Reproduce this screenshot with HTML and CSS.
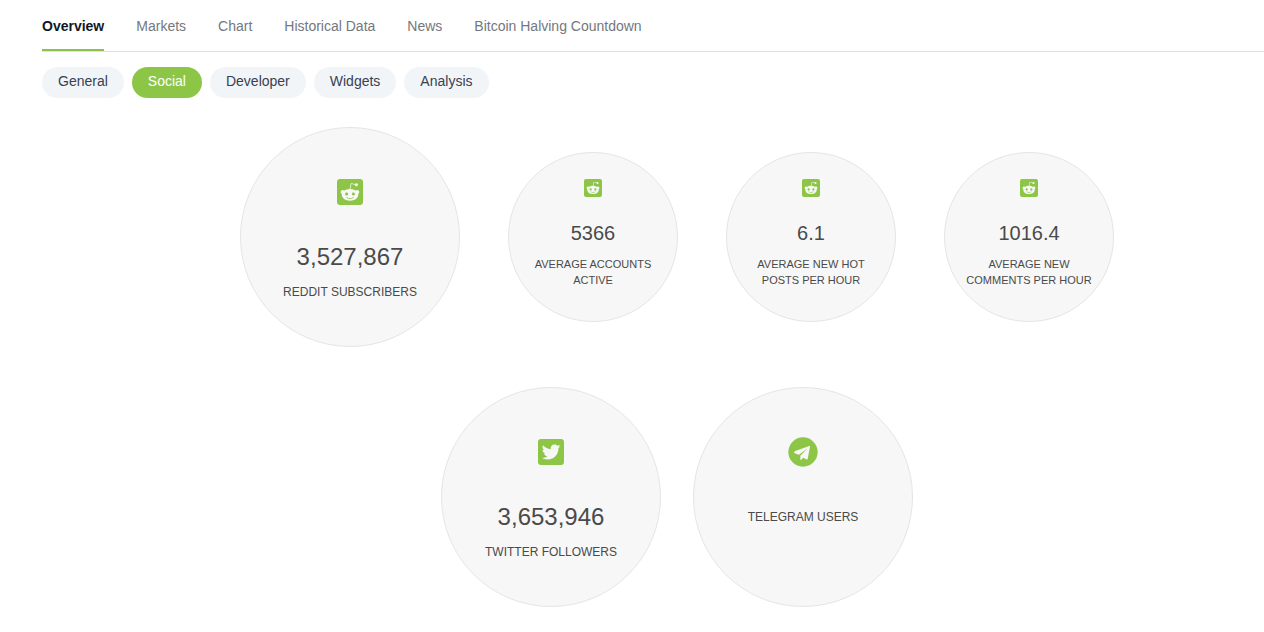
FILE: index.html
```html
<!DOCTYPE html>
<html lang="en">
<head>
<meta charset="utf-8">
<title>Bitcoin Social Stats</title>
<link rel="stylesheet" href="styles.css">
</head>
<body>
<svg class="sprite" aria-hidden="true">
  <symbol id="reddit" viewBox="0 32 448 448"><path d="M283.2 345.5c2.7 2.7 2.7 6.8 0 9.2-24.5 24.5-93.8 24.6-118.4 0-2.7-2.4-2.7-6.5 0-9.2 2.4-2.4 6.5-2.4 8.9 0 18.7 19.2 81 19.6 100.5 0 2.4-2.3 6.6-2.3 9 0zm-91.3-53.8c0-14.9-11.9-26.8-26.5-26.8-14.9 0-26.8 11.9-26.8 26.8 0 14.6 11.9 26.5 26.8 26.5 14.6 0 26.5-11.9 26.5-26.5zm90.7-26.8c-14.6 0-26.5 11.9-26.5 26.8 0 14.6 11.9 26.5 26.5 26.5 14.9 0 26.8-11.9 26.8-26.5 0-14.9-11.9-26.8-26.8-26.8zM448 80v352c0 26.5-21.5 48-48 48H48c-26.5 0-48-21.5-48-48V80c0-26.5 21.5-48 48-48h352c26.5 0 48 21.5 48 48zm-99.7 140.6c-10.1 0-19 4.2-25.6 10.7-24.1-16.7-56.5-27.4-92.5-28.6l18.7-84.2 59.5 13.4c0 14.6 11.9 26.5 26.5 26.5 14.9 0 26.8-12.2 26.8-26.8 0-14.6-11.9-26.8-26.8-26.8-10.4 0-19.3 6.2-23.8 14.9l-65.7-14.6c-3.3-.9-6.5 1.5-7.4 4.8l-20.5 92.8c-35.7 1.5-67.8 12.2-91.9 28.9-6.5-6.8-15.8-11-25.9-11-37.5 0-49.8 50.4-15.5 67.5-1.2 5.4-1.8 11-1.8 16.7 0 56.5 63.7 102.3 141.9 102.3 78.5 0 142.2-45.8 142.2-102.3 0-5.7-.6-11.6-2.1-17 33.6-17.2 21.2-67.2-16.1-67.2z"/></symbol>
  <symbol id="twitter" viewBox="0 32 448 448"><path d="M400 32H48C21.5 32 0 53.5 0 80v352c0 26.5 21.5 48 48 48h352c26.5 0 48-21.5 48-48V80c0-26.5-21.5-48-48-48zm-48.900 158.800c.2 2.800.2 5.700.2 8.500 0 86.700-66 186.600-186.600 186.600-37.200 0-71.700-10.800-100.700-29.400 5.300.6 10.400.8 15.800.8 30.700 0 58.900-10.400 81.400-28-28.800-.6-53-19.500-61.300-45.500 10.100 1.500 19.200 1.500 29.600-1.200-30-6.100-52.500-32.500-52.500-64.400v-.8c8.700 4.900 18.900 7.900 29.600 8.300a65.447 65.447 0 0 1-29.200-54.600c0-12.200 3.200-23.400 8.900-33.100 32.300 39.800 80.800 65.800 135.200 68.600-9.300-44.500 24-80.600 64-80.600 18.900 0 35.900 7.900 47.900 20.700 14.800-2.800 29-8.300 41.600-15.800-4.900 15.200-15.200 28-28.800 36.100 13.200-1.400 26-5.100 37.800-10.200-8.900 13.100-20.100 24.700-32.900 34z"/></symbol>
  <symbol id="telegram" viewBox="0 0 90 90"><circle cx="45" cy="45" r="44"/><path class="plane" d="M20 43 64 27q3-1 2 2l-7 36q-1 4-4 2l-10-5-5 6q-3 2-3-2v-10L59 34 33 53l-13-4q-4-3 0-6z"/></symbol>
</svg>

<nav class="tabs">
  <a class="tab tab-active" href="#overview">Overview</a>
  <a class="tab" href="#markets">Markets</a>
  <a class="tab" href="#chart">Chart</a>
  <a class="tab" href="#historical">Historical Data</a>
  <a class="tab" href="#news">News</a>
  <a class="tab" href="#halving">Bitcoin Halving Countdown</a>
</nav>
<nav class="pills">
  <a class="pill" href="#general">General</a>
  <a class="pill pill-active" href="#social">Social</a>
  <a class="pill" href="#developer">Developer</a>
  <a class="pill" href="#widgets">Widgets</a>
  <a class="pill" href="#analysis">Analysis</a>
</nav>

<main class="stats">
  <section class="row row-wide">
    <div class="stat stat-large">
      <svg class="icon" aria-hidden="true"><use href="#reddit"/></svg>
      <div class="value">3,527,867</div>
      <div class="label">REDDIT SUBSCRIBERS</div>
    </div>
    <div class="stat stat-small">
      <svg class="icon" aria-hidden="true"><use href="#reddit"/></svg>
      <div class="value">5366</div>
      <div class="label">AVERAGE ACCOUNTS ACTIVE</div>
    </div>
    <div class="stat stat-small">
      <svg class="icon" aria-hidden="true"><use href="#reddit"/></svg>
      <div class="value">6.1</div>
      <div class="label">AVERAGE NEW HOT POSTS PER HOUR</div>
    </div>
    <div class="stat stat-small">
      <svg class="icon" aria-hidden="true"><use href="#reddit"/></svg>
      <div class="value">1016.4</div>
      <div class="label">AVERAGE NEW COMMENTS PER HOUR</div>
    </div>
  </section>
  <section class="row">
    <div class="stat stat-large">
      <svg class="icon" aria-hidden="true"><use href="#twitter"/></svg>
      <div class="value">3,653,946</div>
      <div class="label">TWITTER FOLLOWERS</div>
    </div>
    <div class="stat stat-large stat-telegram">
      <svg class="icon" aria-hidden="true"><use href="#telegram"/></svg>
      <div class="label">TELEGRAM USERS</div>
    </div>
  </section>
</main>
</body>
</html>
```
FILE: styles.css
```css
* {
  box-sizing: border-box;
}

body {
  margin: 0;
  background: #fff;
  color: #4a4a4a;
  font-family: "Liberation Sans", Arial, sans-serif;
  font-size: 14px;
  line-height: 20px;
}

.sprite {
  display: none;
}

.tabs {
  display: flex;
  gap: 32px;
  margin-left: 42px;
  border-bottom: 1px solid #dfe1e4;
}

.tab {
  padding: 16px 0 15px;
  color: #74777e;
  text-decoration: none;
}

.tab-active {
  padding-bottom: 13px;
  border-bottom: 2px solid #8fbf4d;
  color: #111827;
  font-weight: bold;
}

.pills {
  display: flex;
  flex-wrap: wrap;
  gap: 8px;
  margin: 15px 0 0 42px;
}

.pill {
  padding: 4px 16px 7px;
  border-radius: 16px;
  background: #f2f5f7;
  color: #374151;
  text-decoration: none;
}

.pill-active {
  background: #8dc647;
  color: #fff;
}

.stats {
  display: flex;
  flex-direction: column;
  gap: 40px;
  padding: 29px 0 25px 90px;
}

.row {
  display: flex;
  flex-wrap: wrap;
  justify-content: center;
  align-items: center;
  gap: 32px;
}

.row-wide {
  gap: 48px;
}

.stat {
  display: flex;
  flex-direction: column;
  align-items: center;
  border: 1px solid #e5e5e5;
  border-radius: 50%;
  background: #f7f7f7;
  text-align: center;
}

.stat-large {
  width: 220px;
  height: 220px;
  padding-top: 51px;
}

.stat-small {
  width: 170px;
  height: 170px;
  padding: 26px 16px 0;
}

.icon {
  width: 26px;
  height: 26px;
  fill: #8dc647;
}

.value {
  margin-top: 36px;
  font-size: 24px;
  line-height: 32px;
}

.label {
  margin-top: 11px;
  font-size: 12px;
  line-height: 16px;
}

.stat-small .icon {
  width: 18px;
  height: 18px;
}

.stat-small .value {
  margin-top: 24px;
  font-size: 20px;
  line-height: 24px;
}

.stat-small .label {
  font-size: 11px;
}

.stat-telegram {
  padding-top: 49px;
}

.stat-telegram .icon {
  width: 30px;
  height: 30px;
}

.stat-telegram .label {
  margin-top: 42px;
}

.plane {
  fill: #f7f7f7;
}
```
